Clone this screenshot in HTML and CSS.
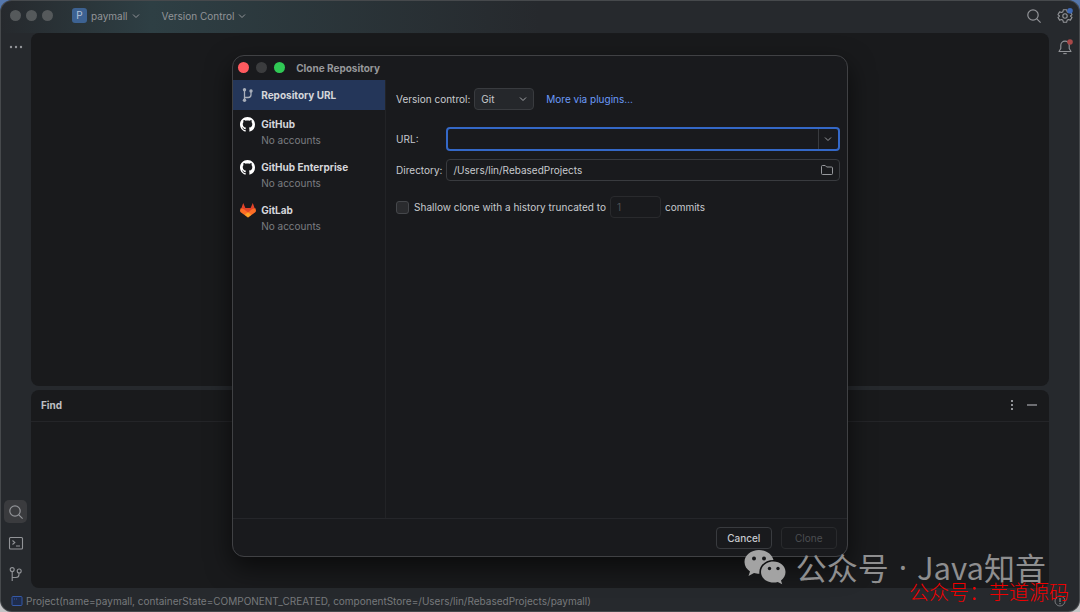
FILE: index.html
```html
<!DOCTYPE html>
<html lang="en">
<head>
    <meta charset="UTF-8">
    <meta name="viewport" content="width=device-width, initial-scale=1.0">
    <title>Clone Repository</title>
    <link rel="stylesheet" href="styles.css">
</head>
<body>
    <svg class="defs" width="0" height="0" aria-hidden="true">
        <symbol id="chevron" viewBox="0 0 8 8"><path d="M1 2.5 4 5.5 7 2.5" fill="none" stroke="currentColor"/></symbol>
        <symbol id="search" viewBox="0 0 16 16"><circle cx="7" cy="7" r="5.2" fill="none" stroke="currentColor" stroke-width="1.2"/><path d="m10.8 10.8 3.8 3.8" fill="none" stroke="currentColor" stroke-width="1.2"/></symbol>
        <symbol id="github" viewBox="0 0 16 16"><path fill="currentColor" d="M8 0C3.58 0 0 3.58 0 8c0 3.54 2.29 6.53 5.47 7.59.4.07.55-.17.55-.38 0-.19-.01-.82-.01-1.49-2.01.37-2.53-.49-2.69-.94-.09-.23-.48-.94-.82-1.13-.28-.15-.68-.52-.01-.53.63-.01 1.08.58 1.23.82.72 1.21 1.87.87 2.33.66.07-.52.28-.87.51-1.07-1.78-.2-3.64-.89-3.64-3.95 0-.87.31-1.59.82-2.15-.08-.2-.36-1.02.08-2.12 0 0 .67-.21 2.2.82.64-.18 1.32-.27 2-.27s1.36.09 2 .27c1.53-1.04 2.2-.82 2.2-.82.44 1.1.16 1.92.08 2.12.51.56.82 1.27.82 2.15 0 3.07-1.87 3.75-3.65 3.95.29.25.54.73.54 1.48 0 1.07-.01 1.93-.01 2.2 0 .21.15.46.55.38A8.01 8.01 0 0 0 16 8c0-4.42-3.58-8-8-8z"/></symbol>
    </svg>

    <div class="ide">
        <header class="titlebar">
            <div class="lights">
                <span></span>
                <span></span>
                <span></span>
            </div>
            <button class="project"><span class="badge">P</span>paymall<svg width="8" height="8"><use href="#chevron"/></svg></button>
            <button class="vcs">Version Control<svg width="8" height="8"><use href="#chevron"/></svg></button>
            <div class="title-actions">
                <button aria-label="Search"><svg width="16" height="16"><use href="#search"/></svg></button>
                <button aria-label="Settings">
                    <svg width="16" height="16" viewBox="0 0 16 16" fill="none" stroke="currentColor" stroke-width="1.1" stroke-linejoin="round">
                        <path d="M6.4 1.7h3.2l.5 2 1.3.8 2-.6 1.6 2.7L13.5 8l1.5 1.4-1.6 2.7-2-.6-1.3.8-.5 2H6.4l-.5-2-1.3-.8-2 .6L1 9.4 2.5 8 1 6.6l1.6-2.7 2 .6 1.3-.8z"/>
                        <circle cx="8" cy="8" r="2.2"/>
                        <circle class="dot-blue" cx="13" cy="2.8" r="2.8" stroke="none"/>
                    </svg>
                </button>
            </div>
        </header>

        <nav class="rail" aria-label="Tool windows">
            <button aria-label="More">
                <svg width="14" height="4" viewBox="0 0 14 4" fill="currentColor"><circle cx="2" cy="2" r="1.2"/><circle cx="7" cy="2" r="1.2"/><circle cx="12" cy="2" r="1.2"/></svg>
            </button>
            <div class="rail-bottom">
                <button class="active" aria-label="Find"><svg width="16" height="16"><use href="#search"/></svg></button>
                <button aria-label="Terminal">
                    <svg width="16" height="16" viewBox="0 0 16 16" fill="none" stroke="currentColor" stroke-width="1.1"><rect x="1.5" y="2.5" width="13" height="11.5" rx="1"/><path d="m4.5 5.5 2.3 2-2.3 2M8 11h4"/></svg>
                </button>
                <button aria-label="Git">
                    <svg width="16" height="16" viewBox="0 0 16 16" fill="none" stroke="currentColor" stroke-width="1.1"><circle cx="4.2" cy="3.6" r="2"/><circle cx="11.2" cy="5" r="2"/><path d="M4.2 5.6V15M4.2 11.5H8a3 3 0 0 0 3-3V7"/></svg>
                </button>
            </div>
        </nav>

        <main class="workspace">
            <section class="panel editor"></section>
            <section class="panel find">
                <div class="find-header">
                    <h2>Find</h2>
                    <button aria-label="Options"><svg width="4" height="12" viewBox="0 0 4 12" fill="currentColor"><path d="M1 1h2v2H1zM1 5h2v2H1zM1 9h2v2H1z"/></svg></button>
                    <button aria-label="Hide"><svg width="12" height="12" viewBox="0 0 12 12" fill="none" stroke="currentColor"><path d="M1 6h10" stroke-width="1.4"/></svg></button>
                </div>
            </section>
        </main>

        <aside class="rail rail-right">
            <button aria-label="Notifications">
                <svg width="16" height="16" viewBox="0 0 16 16" fill="none" stroke="currentColor" stroke-width="1.1" stroke-linejoin="round">
                    <path d="M2 12.5h12l-1.8-3V6.3a4.2 4.2 0 0 0-8.4 0v3.2z"/>
                    <path d="M6.3 14.6h3.4"/>
                    <circle class="dot-red" cx="13" cy="3" r="2.8" stroke="none"/>
                </svg>
            </button>
        </aside>

        <footer class="statusbar">
            <svg width="12" height="12" viewBox="0 0 12 12" fill="#1e2c4d" stroke="#3559a8"><rect x="1" y="1.5" width="10" height="9" rx="1"/><path d="M3 4h1M5 4h1"/></svg>
            <span>Project(name=paymall, containerState=COMPONENT_CREATED, componentStore=/Users/lin/RebasedProjects/paymall)</span>
            <button aria-label="Problems">
                <svg width="12" height="12" viewBox="0 0 12 12" fill="none" stroke="currentColor"><circle cx="6" cy="6" r="5"/><path d="M6 3v4M6 8v1.3" stroke-width="1.4"/></svg>
            </button>
        </footer>
    </div>

    <div class="dialog" role="dialog" aria-labelledby="dialogTitle">
        <div class="dialog-title">
            <div class="lights">
                <span class="close"></span>
                <span class="minimize"></span>
                <span class="maximize"></span>
            </div>
            <h1 id="dialogTitle">Clone Repository</h1>
        </div>
        <div class="dialog-body">
            <nav class="sources">
                <button class="source selected">
                    <svg width="16" height="16" viewBox="0 0 16 16" fill="none" stroke="#a9afba" stroke-width="1.3"><path d="M4.5 3v10M4.5 10.5h3.7a2.8 2.8 0 0 0 2.8-2.8V4"/><g fill="#a9afba" stroke="none"><circle cx="4.5" cy="2.7" r="1.7"/><circle cx="4.5" cy="13.3" r="1.7"/><circle cx="11" cy="4" r="1.7"/></g></svg>
                    <span class="name">Repository URL</span>
                </button>
                <button class="source">
                    <svg width="15" height="15"><use href="#github"/></svg>
                    <span class="name">GitHub</span>
                    <span class="accounts">No accounts</span>
                </button>
                <button class="source">
                    <svg width="15" height="15"><use href="#github"/></svg>
                    <span class="name">GitHub Enterprise</span>
                    <span class="accounts">No accounts</span>
                </button>
                <button class="source">
                    <svg width="16" height="16" viewBox="0 0 16 16">
                        <path fill="#e24329" d="M3.2 1 1 7.2 8 15l7-7.8L12.8 1l-2.2 5H5.4z"/>
                        <path fill="#fc6d26" d="M.6 6.3 0 8.4c0 .9.3 1.6 1 2.1L8 15.4l7-4.9c.7-.5 1-1.2 1-2.1l-.6-2.1c-2 .2-3.5 1-4.9 2.1L8 10.4 5.5 8.4C4.1 7.3 2.6 6.5.6 6.3z"/>
                        <path fill="#fca326" d="M8 10.2 4.8 12.8 8 15.4l3.2-2.6z"/>
                    </svg>
                    <span class="name">GitLab</span>
                    <span class="accounts">No accounts</span>
                </button>
            </nav>
            <form class="clone-form" id="cloneForm">
                <div class="row vcs-row">
                    <label for="vcs">Version control:</label>
                    <div class="select">
                        <select id="vcs"><option>Git</option></select>
                        <svg width="8" height="8"><use href="#chevron"/></svg>
                    </div>
                    <a href="#">More via plugins…</a>
                </div>
                <div class="fields">
                    <label for="url">URL:</label>
                    <div class="field focused">
                        <input type="text" id="url">
                        <button type="button" class="history" aria-label="Recent URLs"><svg width="8" height="8"><use href="#chevron"/></svg></button>
                    </div>
                    <label for="directory">Directory:</label>
                    <div class="field">
                        <input type="text" id="directory" value="/Users/lin/RebasedProjects">
                        <button type="button" class="browse" aria-label="Browse">
                            <svg width="12" height="12" viewBox="0 0 12 12" fill="none" stroke="currentColor"><path d="M.5 2.5a1 1 0 0 1 1-1h2.7l1.5 1.5h4.8a1 1 0 0 1 1 1v5.5a1 1 0 0 1-1 1h-9a1 1 0 0 1-1-1z"/></svg>
                        </button>
                    </div>
                </div>
                <div class="row shallow-row">
                    <input type="checkbox" id="shallow">
                    <label for="shallow">Shallow clone with a history truncated to</label>
                    <input type="text" class="depth" value="1" aria-label="Commits" disabled>
                    <span>commits</span>
                </div>
            </form>
        </div>
        <div class="dialog-footer">
            <button type="button" class="btn">Cancel</button>
            <button type="submit" form="cloneForm" class="btn" disabled>Clone</button>
        </div>
    </div>

    <div class="watermark" lang="zh">
        <svg width="42" height="36" viewBox="0 0 42 36">
            <path fill="#a3a3a3" d="M15 1C7 1 .5 6.4.5 13c0 4 2.2 7.3 5.5 9.4L4.5 27l5.5-3c1.7.5 3.3.8 5.4.8C14.5 17 21 11 29.5 11 28 5 22 1 15 1z"/>
            <path fill="#a3a3a3" d="M29.5 12.500C22.5 12.500 17 17 17 23s5.500 10.500 12.500 10.500c1.500 0 3-.2 4.300-.6l4.400 2.300-1.200-3.800c2.800-2 4.500-5 4.500-8.400 0-6-5.500-10.500-12-10.500z"/>
            <g fill="#161719"><circle cx="10" cy="9.500" r="2"/><circle cx="20" cy="9.500" r="2"/><circle cx="25.500" cy="19.500" r="1.700"/><circle cx="34" cy="19.500" r="1.700"/></g>
        </svg>
        <span>公众号</span>
        <span class="separator">·</span>
        <span>Java知音</span>
    </div>
    <div class="credit" lang="zh">公众号：芋道源码</div>
</body>
</html>
```
FILE: styles.css
```css
:root {
    --frame: #26292d;
    --panel: #191a1c;
    --dialog: #191a1d;
    --line: #292a2d;
    --border: #393b3f;
    --text: #c8cacf;
    --muted: #7b7d81;
    --accent: #3468c7;
}

* {
    margin: 0;
    padding: 0;
    box-sizing: border-box;
}

body {
    font-family: Inter, "Noto Sans CJK SC", sans-serif;
    font-size: 10px;
    line-height: 14px;
    color: var(--text);
    background: linear-gradient(#5577ac 50%, #c4c4c6 50%);
    height: 100vh;
    overflow: hidden;
}

button,
input,
select {
    font: inherit;
    color: inherit;
    background: none;
    border: none;
    outline: none;
}

button {
    display: flex;
    align-items: center;
    justify-content: center;
}

svg {
    display: block;
    flex: none;
}

.defs {
    position: absolute;
}

/* IDE window */
.ide {
    height: 100vh;
    display: grid;
    grid-template: 33px 1fr 24px / 31px 1fr 31px;
    background: linear-gradient(90deg, transparent, #2e3f44 14%, transparent 50%) top / 100% 33px no-repeat var(--frame);
    border-radius: 12px;
    box-shadow: inset 0 0 0 1px #46494c;
    color: #929498;
}

.titlebar {
    grid-column: 1 / -1;
    display: flex;
    align-items: center;
    padding: 0 7px 2px 10px;
}

.lights {
    display: flex;
    gap: 5px;
}

.lights span {
    width: 11px;
    height: 11px;
    border-radius: 50%;
    background: #55595b;
}

.project {
    gap: 4px;
    margin-left: 19px;
}

.vcs {
    gap: 4px;
    margin-left: 22px;
}

.badge {
    width: 15px;
    height: 15px;
    border-radius: 3px;
    background: #3d6292;
    color: #b5c4d8;
    line-height: 15px;
}

.title-actions {
    display: flex;
    gap: 15px;
    margin-left: auto;
}

.dot-blue {
    fill: #3d68b5;
}

.dot-red {
    fill: #a84848;
}

.rail {
    display: flex;
    flex-direction: column;
    justify-content: space-between;
    align-items: center;
    padding: 12px 0 3px;
}

.rail-right {
    padding: 6px 0 0;
}

.rail-bottom {
    display: flex;
    flex-direction: column;
    gap: 8px;
}

.rail-bottom button {
    width: 23px;
    height: 23px;
    border-radius: 5px;
}

.rail-bottom .active {
    background: #3a3b3e;
}

.workspace {
    display: flex;
    flex-direction: column;
    gap: 4px;
}

.panel {
    background: var(--panel);
    border-radius: 8px;
}

.editor {
    flex: 16;
}

.find {
    flex: 9;
}

.find-header {
    display: flex;
    align-items: center;
    gap: 12px;
    height: 32px;
    padding: 0 11px 0 10px;
    border-bottom: 1px solid #242528;
}

.find-header h2 {
    flex: 1;
    font-size: 10px;
    font-weight: 700;
    color: #bfc0c3;
}

.statusbar {
    grid-column: 1 / -1;
    display: flex;
    align-items: center;
    gap: 3px;
    padding: 2px 14px 0 11px;
    color: #77797c;
}

.statusbar button {
    margin-left: auto;
}

/* Clone dialog */
.dialog {
    position: absolute;
    inset: 0;
    margin: auto;
    width: 57%;
    height: 82%;
    display: flex;
    flex-direction: column;
    background: var(--dialog);
    border-radius: 12px;
    box-shadow: 0 10px 26px rgba(0, 0, 0, 0.6);
    outline: 1px solid #404144;
    outline-offset: -1px;
    overflow: hidden;
}

.dialog-title {
    display: flex;
    align-items: center;
    gap: 11px;
    height: 25px;
    padding-left: 6px;
}

.dialog-title .lights {
    gap: 7px;
}

.dialog-title h1 {
    font-size: 10px;
    font-weight: 700;
    color: #96979a;
}

.lights .close {
    background: #ff5a5f;
}

.lights .minimize {
    background: #3b3c3e;
}

.lights .maximize {
    background: #30c955;
}

.dialog-body {
    flex: 1;
    display: flex;
}

.sources {
    width: 25%;
    border-right: 1px solid #222326;
}

.source {
    display: grid;
    grid-template-columns: 16px 1fr;
    justify-items: start;
    column-gap: 5px;
    row-gap: 1px;
    width: 100%;
    height: 43px;
    padding: 0 8px;
    align-content: center;
    text-align: left;
    color: #fff;
}

.source .name {
    font-weight: 700;
    color: #d5d6da;
}

.source .accounts {
    grid-column: 2;
    color: var(--muted);
}

.source.selected {
    height: 30px;
    background: #243659;
}

.clone-form {
    flex: 1;
    padding: 8px 8px 8px 10px;
}

.row {
    display: flex;
    align-items: center;
}

.select {
    display: grid;
    align-items: center;
    margin: 0 12px 0 4px;
}

.select select {
    grid-area: 1 / 1;
    appearance: none;
    width: 60px;
    height: 22px;
    padding-left: 6px;
    background: #25272b;
    border: 1px solid var(--border);
    border-radius: 4px;
}

.select svg {
    grid-area: 1 / 1;
    justify-self: end;
    margin-right: 7px;
    color: #a5a7ab;
    pointer-events: none;
}

.vcs-row a {
    color: #6b9bfa;
    text-decoration: none;
}

.fields {
    display: grid;
    grid-template-columns: auto 1fr;
    align-items: center;
    gap: 8px 4px;
    margin-top: 17px;
}

.field {
    display: flex;
    height: 22px;
    border: 1px solid var(--border);
    border-radius: 4px;
}

.field.focused {
    height: 24px;
    border: 2px solid var(--accent);
}

.field input {
    flex: 1;
    padding-left: 6px;
}

.field button {
    color: #96989c;
}

.history {
    width: 20px;
    border-left: 1px solid var(--border);
}

.browse {
    width: 24px;
}

.shallow-row {
    margin-top: 15px;
    gap: 4px;
}

.shallow-row input[type="checkbox"] {
    appearance: none;
    width: 13px;
    height: 13px;
    margin-right: 1px;
    background: #2a2b2e;
    border: 1px solid #45474b;
    border-radius: 3px;
}

.shallow-row .depth {
    width: 51px;
    height: 22px;
    padding-left: 6px;
    color: #505256;
    border: 1px solid var(--line);
    border-radius: 4px;
}

.dialog-footer {
    display: flex;
    justify-content: flex-end;
    gap: 9px;
    padding: 8px 11px 8px;
    border-top: 1px solid #25262a;
}

.btn {
    width: 56px;
    height: 22px;
    border: 1px solid var(--border);
    border-radius: 4px;
    font-weight: 500;
}

.btn:disabled {
    color: #4c4e52;
    border-color: var(--line);
    font-weight: 400;
}

/* Overlaid marks */
.watermark {
    position: absolute;
    right: 34px;
    bottom: 26px;
    display: flex;
    align-items: center;
    gap: 10px;
    font-family: "Noto Sans CJK SC", sans-serif;
    font-size: 31px;
    font-weight: 400;
    line-height: 38px;
    color: #8e8e8f;
}

.separator {
    font-family: "Noto Sans", sans-serif;
}

.credit {
    position: absolute;
    right: 11px;
    bottom: 9px;
    font-family: "Noto Sans CJK SC", sans-serif;
    font-size: 20px;
    font-weight: 300;
    line-height: 22px;
    color: #f00000;
}
```
